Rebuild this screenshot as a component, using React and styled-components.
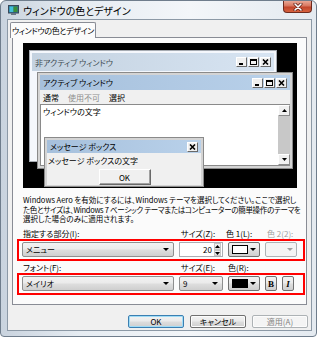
import React from "react";
import styled, { createGlobalStyle } from "styled-components";

const GlobalStyle = createGlobalStyle`
  html, body { margin: 0; padding: 0; background: #fff; }
  body {
    font-family: "Noto Sans CJK JP", "Noto Sans", sans-serif;
    font-size: 8px;
    font-feature-settings: "palt";
    color: #000;
  }
`;

const Frame = styled.div`
  width: 317px;
  height: 337px;
  box-sizing: border-box;
  border: 1px solid #6f7d8c;
  border-radius: 6px 6px 4px 4px;
  background: linear-gradient(90deg, #c9d3de 0%, #e6ecf2 25%, #f3f6f9 60%, #e4eaf0 100%);
  display: flex;
  flex-direction: column;
  padding: 0 4px 5px 6px;
`;

const TitleBar = styled.div`
  height: 18px;
  display: flex;
  align-items: center;
  margin-left: 1px;
`;

const Title = styled.span`
  font-size: 10px;
  margin-left: 4px;
  color: #000;
  flex: 1;
  white-space: nowrap;
`;

const CloseButton = styled.div`
  align-self: flex-start;
  width: 29px;
  height: 12px;
  box-sizing: border-box;
  border: 1px solid #6d2b1f;
  border-top: none;
  border-radius: 0 0 4px 4px;
  background: linear-gradient(180deg, #e9a795 0%, #d8765e 45%, #c2452b 55%, #d7623f 100%);
  display: flex;
  align-items: center;
  justify-content: center;
`;

const Body = styled.div`
  flex: 1;
  background: #f0f0f0;
  border: 1px solid #8c99a6;
  display: flex;
  flex-direction: column;
`;

const TabStrip = styled.div`
  display: flex;
  padding-left: 2px;
  margin-top: 2px;
  height: 15px;
  position: relative;
  z-index: 1;
`;

const Tab = styled.div`
  height: 16px;
  box-sizing: border-box;
  width: 86px;
  border: 1px solid #898c95;
  border-bottom: none;
  border-radius: 2px 2px 0 0;
  background: #fbfbfb;
  display: flex;
  align-items: center;
  justify-content: center;
  white-space: nowrap;
  font-size: 8px;
  letter-spacing: -0.35px;
`;

const TabPanel = styled.div`
  margin: 0 4px;
  height: 268px;
  box-sizing: border-box;
  border: 1px solid #898c95;
  background: #fbfbfb;
  display: flex;
  flex-direction: column;
  padding-top: 5px;
`;

const Preview = styled.div`
  position: relative;
  margin-left: 10px;
  width: 274px;
  height: 145px;
  flex-shrink: 0;
  background: #000;
  overflow: hidden;
`;

const MiniWindow = styled.div`
  position: absolute;
  left: ${(p) => p.$left}px;
  top: ${(p) => p.$top}px;
  width: ${(p) => p.$width}px;
  height: ${(p) => p.$height}px;
  box-sizing: border-box;
  border: 1px solid ${(p) => (p.$active ? "#8a8a8a" : "#a6abb2")};
  background: ${(p) => (p.$active ? "#d4d4d4" : "#f4f7fc")};
  padding: 2px;
  display: flex;
  flex-direction: column;
`;

const MiniTitle = styled.div`
  height: ${(p) => p.$h}px;
  flex-shrink: 0;
  display: flex;
  align-items: center;
  padding: 0 3px;
  color: ${(p) => (p.$active ? "#000" : "#434e54")};
  background: ${(p) =>
    p.$active
      ? "linear-gradient(90deg, #a6c0dc 0%, #b9d1ea 100%)"
      : "linear-gradient(90deg, #c4d2e0 0%, #d7e4f2 100%)"};
`;

const MiniTitleText = styled.span`
  flex: 1;
  white-space: nowrap;
`;

const CaptionButtons = styled.div`
  display: flex;
  gap: 1px;
`;

const CapBtn = styled.div`
  width: 11px;
  height: 10px;
  box-sizing: border-box;
  background: #f0f0f0;
  border: 1px solid;
  border-color: #fff #696969 #696969 #fff;
  display: flex;
  align-items: center;
  justify-content: center;
`;

const MenuBar = styled.div`
  height: 14px;
  flex-shrink: 0;
  display: flex;
  align-items: center;
  gap: 9px;
  padding-left: 3px;
  background: #f0f0f0;
`;

const MenuItem = styled.span`
  color: ${(p) => (p.$disabled ? "#8d8d8d" : "#000")};
`;

const ClientArea = styled.div`
  flex: 1;
  display: flex;
  background: #fff;
  border: 1px solid #8a8a8a;
  border-right: none;
`;

const ClientText = styled.div`
  flex: 1;
  padding: 2px 0 0 2px;
  line-height: 10px;
`;

const ScrollBar = styled.div`
  width: 12px;
  background: #c8c8c8;
  display: flex;
  flex-direction: column;
  justify-content: space-between;
`;

const ScrollArrow = styled.div`
  height: 11px;
  box-sizing: border-box;
  background: #f0f0f0;
  border: 1px solid;
  border-color: #fff #8a8a8a #8a8a8a #fff;
  display: flex;
  align-items: center;
  justify-content: center;
`;

const MsgBody = styled.div`
  flex: 1;
  background: #f0f0f0;
  display: flex;
  flex-direction: column;
  padding: 1px 0 0 1px;
`;

const MsgText = styled.div`
  line-height: 14px;
`;

const MiniButton = styled.div`
  align-self: center;
  width: 52px;
  height: 16px;
  box-sizing: border-box;
  background: #f0f0f0;
  border: 1px solid;
  border-color: #fff #696969 #696969 #fff;
  box-shadow: inset -1px -1px 0 #a0a0a0;
  display: flex;
  align-items: center;
  justify-content: center;
  margin-top: 1px;
`;

const Description = styled.div`
  margin: 7px 0 0 10px;
  display: flex;
  flex-direction: column;
  font-size: 7.5px;
`;

const DescLine = styled.span`
  height: 9.6px;
  line-height: 9.6px;
  white-space: nowrap;
  letter-spacing: ${(p) => p.$ls || 0}px;
`;

const LabelRow = styled.div`
  display: grid;
  grid-template-columns: ${(p) => p.$cols};
  column-gap: 5px;
  margin: ${(p) => p.$mt}px 0 0 4px;
  padding-left: 6px;
  line-height: 10px;
  height: 10px;
`;

const Label = styled.span`
  color: ${(p) => (p.$disabled ? "#a0a0a0" : "#000")};
  white-space: nowrap;
  margin-left: ${(p) => p.$shift || 0}px;
`;

const Highlight = styled.div`
  display: grid;
  grid-template-columns: ${(p) => p.$cols};
  column-gap: 5px;
  align-items: center;
  margin-left: 4px;
  width: 288px;
  height: 22px;
  flex-shrink: 0;
  box-sizing: border-box;
  border: 2px solid #f00;
  padding: 0 3px;
`;

const Combo = styled.div`
  height: 15px;
  box-sizing: border-box;
  border: 1px solid #8e8f8f;
  border-radius: 2px;
  background: linear-gradient(180deg, #f2f2f2 0%, #ebebeb 45%, #dddddd 55%, #cfcfcf 100%);
  display: flex;
  align-items: center;
  padding: 0 4px 0 3px;
`;

const ComboText = styled.span`
  flex: 1;
  white-space: nowrap;
`;

const Arrow = styled.span`
  width: 0;
  height: 0;
  border-left: 3px solid transparent;
  border-right: 3px solid transparent;
  border-top: 3px solid ${(p) => p.$color || "#000"};
`;

const Spinner = styled.div`
  height: 15px;
  box-sizing: border-box;
  border: 1px solid #abadb3;
  background: #fff;
  display: flex;
  align-items: center;
  justify-content: flex-end;
  padding-right: 1px;
  gap: 2px;
`;

const SpinButtons = styled.div`
  display: flex;
  flex-direction: column;
  height: 13px;
  width: 7px;
`;

const SpinHalf = styled.div`
  flex: 1;
  background: linear-gradient(180deg, #f3f3f3, #dedede);
  border: 1px solid #c5c5c5;
  box-sizing: border-box;
  display: flex;
  align-items: center;
  justify-content: center;
`;

const ColorButton = styled.div`
  height: 15px;
  box-sizing: border-box;
  border: 1px solid ${(p) => (p.$disabled ? "#adb2b5" : "#707070")};
  border-radius: 2px;
  background: ${(p) =>
    p.$disabled
      ? "#f4f4f4"
      : "linear-gradient(180deg, #f2f2f2 0%, #ebebeb 45%, #dddddd 55%, #cfcfcf 100%)"};
  display: flex;
  align-items: center;
  justify-content: ${(p) => (p.$disabled ? "flex-end" : "space-between")};
  padding: 0 3px;
`;

const Swatch = styled.span`
  width: 14px;
  height: 7px;
  border: 1px solid #000;
  background: ${(p) => p.$color};
`;

const StyleButton = styled.div`
  height: 15px;
  box-sizing: border-box;
  border: 1px solid #707070;
  border-radius: 2px;
  background: linear-gradient(180deg, #f2f2f2 0%, #ebebeb 45%, #dddddd 55%, #cfcfcf 100%);
  display: flex;
  align-items: center;
  justify-content: center;
  font-family: "Liberation Serif", serif;
  font-size: 9px;
  font-weight: bold;
  font-style: ${(p) => (p.$italic ? "italic" : "normal")};
`;

const ButtonRow = styled.div`
  display: flex;
  justify-content: flex-end;
  gap: 6px;
  margin-top: 10px;
  padding-right: 3px;
`;

const DialogButton = styled.div`
  width: 56px;
  height: 13px;
  box-sizing: border-box;
  border: 1px solid ${(p) => (p.$default ? "#3c7fb1" : p.$disabled ? "#adb2b5" : "#707070")};
  border-radius: 2px;
  background: ${(p) =>
    p.$disabled
      ? "#f4f4f4"
      : "linear-gradient(180deg, #f2f2f2 0%, #ebebeb 45%, #dddddd 55%, #cfcfcf 100%)"};
  box-shadow: ${(p) => (p.$default ? "inset 0 0 0 1px #9fdcf7" : "inset 0 0 0 1px #fcfcfc")};
  color: ${(p) => (p.$disabled ? "#838383" : "#000")};
  display: flex;
  align-items: center;
  justify-content: center;
  font-size: 8px;
`;

function AppIcon() {
  return (
    <svg width="11" height="10" viewBox="0 0 11 10">
      <rect x="0.5" y="0.5" width="10" height="7.5" fill="#2f6f9a" stroke="#3a4a5a" />
      <rect x="1.5" y="1.5" width="4" height="5.5" fill="#44c0d8" />
      <rect x="5.5" y="1.5" width="4" height="5.5" fill="#3d8f3a" />
      <rect x="3" y="8" width="5" height="2" fill="#6a7684" />
    </svg>
  );
}

function CloseGlyph() {
  return (
    <svg width="10" height="8" viewBox="0 0 10 8">
      <path d="M2 1 L8 7 M8 1 L2 7" stroke="#5a1a10" strokeWidth="3" strokeLinecap="round" />
      <path d="M2 1 L8 7 M8 1 L2 7" stroke="#fff" strokeWidth="1.6" strokeLinecap="round" />
    </svg>
  );
}

function Glyph({ kind }) {
  if (kind === "min")
    return (
      <svg width="7" height="6" viewBox="0 0 7 6">
        <rect x="1" y="4" width="4" height="2" fill="#000" />
      </svg>
    );
  if (kind === "max")
    return (
      <svg width="7" height="6" viewBox="0 0 7 6">
        <rect x="0.5" y="0.5" width="6" height="5" fill="none" stroke="#000" />
        <rect x="0" y="0" width="7" height="2" fill="#000" />
      </svg>
    );
  return (
    <svg width="7" height="6" viewBox="0 0 7 6">
      <path d="M1 0.5 L6 5.5 M6 0.5 L1 5.5" stroke="#000" strokeWidth="1.6" />
    </svg>
  );
}

function Caption({ close }) {
  return (
    <CaptionButtons>
      {!close && (
        <>
          <CapBtn>
            <Glyph kind="min" />
          </CapBtn>
          <CapBtn>
            <Glyph kind="max" />
          </CapBtn>
        </>
      )}
      <CapBtn>
        <Glyph kind="close" />
      </CapBtn>
    </CaptionButtons>
  );
}

function TinyTriangle({ up }) {
  return (
    <svg width="5" height="3" viewBox="0 0 5 3">
      <path d={up ? "M0 3 L2.5 0 L5 3 Z" : "M0 0 L2.5 3 L5 0 Z"} fill="#000" />
    </svg>
  );
}

export default function App() {
  return (
    <>
      <GlobalStyle />
      <Frame>
        <TitleBar>
          <AppIcon />
          <Title>ウィンドウの色とデザイン</Title>
          <CloseButton>
            <CloseGlyph />
          </CloseButton>
        </TitleBar>
        <Body>
          <TabStrip>
            <Tab>ウィンドウの色とデザイン</Tab>
          </TabStrip>
          <TabPanel>
            <Preview>
              <MiniWindow $left={6} $top={7} $width={248} $height={112}>
                <MiniTitle $h={18}>
                  <MiniTitleText>非アクティブ ウィンドウ</MiniTitleText>
                  <Caption />
                </MiniTitle>
              </MiniWindow>
              <MiniWindow $active $left={14} $top={29} $width={256} $height={97}>
                <MiniTitle $active $h={15}>
                  <MiniTitleText>アクティブ ウィンドウ</MiniTitleText>
                  <Caption />
                </MiniTitle>
                <MenuBar>
                  <MenuItem>通常</MenuItem>
                  <MenuItem $disabled>使用不可</MenuItem>
                  <MenuItem>選択</MenuItem>
                </MenuBar>
                <ClientArea>
                  <ClientText>ウィンドウの文字</ClientText>
                  <ScrollBar>
                    <ScrollArrow>
                      <TinyTriangle up />
                    </ScrollArrow>
                    <ScrollArrow>
                      <TinyTriangle />
                    </ScrollArrow>
                  </ScrollBar>
                </ClientArea>
              </MiniWindow>
              <MiniWindow $active $left={21} $top={94} $width={160} $height={50}>
                <MiniTitle $active $h={13}>
                  <MiniTitleText>メッセージ ボックス</MiniTitleText>
                  <Caption close />
                </MiniTitle>
                <MsgBody>
                  <MsgText>メッセージ ボックスの文字</MsgText>
                  <MiniButton>OK</MiniButton>
                </MsgBody>
              </MiniWindow>
            </Preview>
            <Description>
              <DescLine>
                Windows Aero を有効にするには、Windows テーマを選択してください。ここで選択し
              </DescLine>
              <DescLine $ls={-0.3}>
                た色とサイズは、Windows 7 ベーシック テーマまたはコンピューターの簡単操作のテーマを
              </DescLine>
              <DescLine>選択した場合のみに適用されます。</DescLine>
            </Description>
            <LabelRow $mt={5} $cols="152px 44px 32px 32px">
              <Label>指定する部分(I):</Label>
              <Label $shift={1}>サイズ(Z):</Label>
              <Label $shift={-3}>色 1(L):</Label>
              <Label $disabled $shift={1}>色 2(2):</Label>
            </LabelRow>
            <Highlight $cols="152px 44px 32px 32px">
              <Combo>
                <ComboText>メニュー</ComboText>
                <Arrow />
              </Combo>
              <Spinner>
                <span>20</span>
                <SpinButtons>
                  <SpinHalf>
                    <TinyTriangle up />
                  </SpinHalf>
                  <SpinHalf>
                    <TinyTriangle />
                  </SpinHalf>
                </SpinButtons>
              </Spinner>
              <ColorButton>
                <Swatch $color="#fff" />
                <Arrow />
              </ColorButton>
              <ColorButton $disabled>
                <Arrow $color="#a0a0a0" />
              </ColorButton>
            </Highlight>
            <LabelRow $mt={2} $cols="152px 44px 32px 12px 12px">
              <Label>フォント(F):</Label>
              <Label $shift={1}>サイズ(E):</Label>
              <Label $shift={-1}>色(R):</Label>
            </LabelRow>
            <Highlight $cols="152px 44px 32px 12px 12px">
              <Combo>
                <ComboText>メイリオ</ComboText>
                <Arrow />
              </Combo>
              <Combo>
                <ComboText>9</ComboText>
                <Arrow />
              </Combo>
              <ColorButton>
                <Swatch $color="#000" />
                <Arrow />
              </ColorButton>
              <StyleButton>B</StyleButton>
              <StyleButton $italic>I</StyleButton>
            </Highlight>
          </TabPanel>
          <ButtonRow>
            <DialogButton $default>OK</DialogButton>
            <DialogButton>キャンセル</DialogButton>
            <DialogButton $disabled>適用(A)</DialogButton>
          </ButtonRow>
        </Body>
      </Frame>
    </>
  );
}
